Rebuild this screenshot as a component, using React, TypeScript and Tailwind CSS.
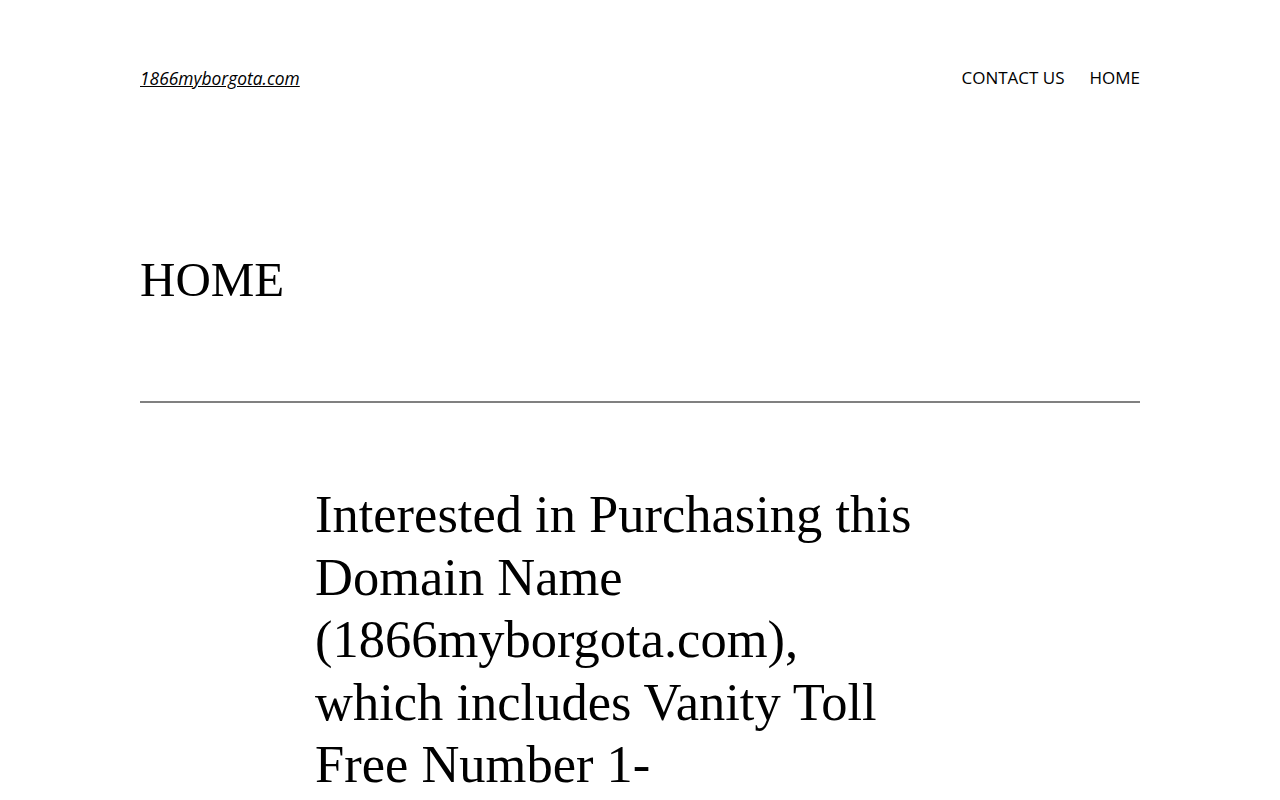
export default function App() {
  const serif = { fontFamily: '"Liberation Serif", "DejaVu Serif", serif' };
  return (
    <div className="min-h-screen bg-white text-black overflow-hidden h-[800px]">
      <header className="mx-auto w-[1000px] pt-[66px] flex items-center justify-between font-['Open_Sans',sans-serif] text-[17px]">
        <a href="#" className="italic underline leading-6 text-[17.4px]">1866myborgota.com</a>
        <nav className="flex gap-[25px] leading-6">
          <a href="#">CONTACT US</a>
          <a href="#">HOME</a>
        </nav>
      </header>
      <main className="mx-auto w-[1000px]">
        <h1 className="mt-[162px] text-[49px] leading-[1.15] font-light" style={serif}>HOME</h1>
        <hr className="mt-[93px] border-0 h-[2px] bg-[#808080]" />
        <div className="mx-auto w-[650px] mt-[80px]">
          <p className="text-[52.5px] leading-[62.5px] font-light whitespace-nowrap" style={serif}>
            Interested in Purchasing this<br />
            Domain Name<br />
            (1866myborgota.com),<br />
            which includes Vanity Toll<br />
            Free Number 1-
          </p>
        </div>
      </main>
    </div>
  );
}
